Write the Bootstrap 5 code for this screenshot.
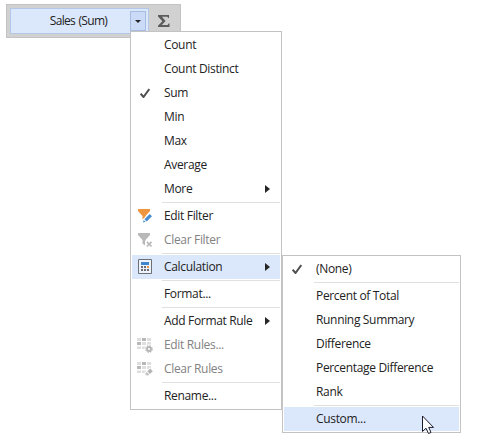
<!DOCTYPE html>
<html lang="en">
<head>
<meta charset="utf-8">
<title>Data item menu</title>
<link href="https://cdn.jsdelivr.net/npm/bootstrap@5.3.0/dist/css/bootstrap.min.css" rel="stylesheet">
<style>
body{font-family:"Open Sans","Noto Sans",sans-serif;font-size:12px;letter-spacing:-.33px;line-height:24px;color:#222;background:#fff;overflow:hidden}
.data-item{margin:4px 0 0 6px;width:175px;height:34px;padding:3px;background:#d1d1d1;border:1px solid #c3c3c3}
.field-box{width:139px;height:26px;background:#dbe7fb;border:1px solid #b3c7e8;padding:2px}
.field-name{padding-left:14px;letter-spacing:-.7px;word-spacing:1px}
.drop-btn{width:16px;height:20px;background:#cbdaf6;border:1px solid #a6bce0}
.sigma{margin-left:9px}
.popup{padding:1px;border:1px solid #c3c3c3;border-radius:0;background:#fff;font-size:inherit;line-height:inherit;color:inherit;min-width:0;--bs-dropdown-min-width:0}
.main-popup{left:130px;top:31px;width:152px;z-index:2}
.sub-popup{left:282px;top:255px;width:179px;z-index:3}
.entry{height:24px;padding-right:10px}
.entry.hot{background:#dbe7fb}
.entry.off{color:#828282}
.slot{width:32px;height:24px;padding-right:6px;flex:none}
.rule{height:1px;margin:1px 0 1px 30px;background:#e0e0e0}
.pointer{left:422px;top:415px;z-index:5}
svg{display:block;flex:none}
</style>
<script src="https://cdn.jsdelivr.net/npm/bootstrap@5.3.0/dist/js/bootstrap.bundle.min.js"></script>
</head>
<body>
<svg width="0" height="0" class="position-absolute">
<defs>
<g id="check"><path d="M.7 5.7 3.5 9 9.3 1" fill="none" stroke="#505050" stroke-width="2"/></g>
<g id="funnel"><path d="M0 0H12V2L7.5 7V13L4.5 10.500V7L0 2Z"/></g>
<g id="cells"><path fill="#dedede" d="M0 0h4v3H0zM10 0h4v3h-4zM5 4h4v3H5zM10 4h4v3h-4zM0 8.500h4v2.500H0zM5 8.500h4v2.500H5z"/><path fill="#b8b8b8" d="M5 0h4v3H5zM0 4h4v3H0z"/></g>
</defs>
</svg>
<div class="data-item d-flex align-items-center">
  <div class="field-box d-flex align-items-center">
    <div class="field-name flex-grow-1 text-center">Sales (Sum)</div>
    <div class="drop-btn d-flex align-items-center justify-content-center"><svg width="6" height="3"><path d="M0 0H6L3 3Z" fill="#262626"/></svg></div>
  </div>
  <svg class="sigma" width="12" height="12"><path d="M0 0H11V3H10L9.500 1.800H4L7.600 6 3.800 10H9.700L10.500 8.500H11.500V12H0V10.800L4.300 6.300 0 1.500Z" fill="#5c5c5c"/></svg>
</div>

<div class="dropdown-menu popup main-popup d-block position-absolute">
  <div class="entry d-flex align-items-center"><span class="slot"></span><span>Count</span></div>
  <div class="entry d-flex align-items-center"><span class="slot"></span><span>Count Distinct</span></div>
  <div class="entry d-flex align-items-center"><span class="slot d-flex align-items-center justify-content-center"><svg width="10" height="10"><use href="#check"/></svg></span><span>Sum</span></div>
  <div class="entry d-flex align-items-center"><span class="slot"></span><span>Min</span></div>
  <div class="entry d-flex align-items-center"><span class="slot"></span><span>Max</span></div>
  <div class="entry d-flex align-items-center"><span class="slot"></span><span>Average</span></div>
  <div class="entry d-flex align-items-center"><span class="slot"></span><span class="flex-grow-1">More</span><svg width="5" height="8"><path d="M0 0 5 4 0 8Z" fill="#262626"/></svg></div>
  <div class="rule"></div>
  <div class="entry d-flex align-items-center"><span class="slot d-flex align-items-center justify-content-center"><svg width="16" height="16"><use href="#funnel" x="1" y="1" fill="#f0953f"/><path d="M5 15 5.500 11.500 12 5.200 15 8.200 8.500 14.300Z" fill="#fff"/><path d="M6 14.500 6.700 12 8.600 13.800ZM7.400 11.200 12.700 6 15 8.300 9.700 13.400Z" fill="#4b8cd0"/></svg></span><span>Edit Filter</span></div>
  <div class="entry off d-flex align-items-center"><span class="slot d-flex align-items-center justify-content-center"><svg width="16" height="16"><use href="#funnel" x="1" y="1" fill="#b9b9b9"/><path d="M8 9H16V16H8Z" fill="#fff"/><path d="M9.900 9.900 14.500 14.500M14.500 9.900 9.900 14.500" stroke="#b9b9b9" stroke-width="1.700"/></svg></span><span>Clear Filter</span></div>
  <div class="rule"></div>
  <div class="entry hot d-flex align-items-center"><span class="slot d-flex align-items-center justify-content-center"><svg width="16" height="16"><path d="M1.500 .5H14.500V14.500H1.500Z" fill="#eef4fd" stroke="#6b7078"/><path d="M4 3H12V6H4Z" fill="#3f86cf"/><path d="M4 7h2v2H4zM7 7h2v2H7zM10 10h2v2h-2zM4 10h2v2H4zM7 10h2v2H7z" fill="#686d75"/><path d="M10 7h2v2h-2z" fill="#f0953f"/></svg></span><span class="flex-grow-1">Calculation</span><svg width="5" height="8"><path d="M0 0 5 4 0 8Z" fill="#262626"/></svg></div>
  <div class="rule"></div>
  <div class="entry d-flex align-items-center"><span class="slot"></span><span>Format...</span></div>
  <div class="rule"></div>
  <div class="entry d-flex align-items-center"><span class="slot"></span><span class="flex-grow-1">Add Format Rule</span><svg width="5" height="8"><path d="M0 0 5 4 0 8Z" fill="#262626"/></svg></div>
  <div class="entry off d-flex align-items-center"><span class="slot d-flex align-items-center justify-content-center"><svg width="16" height="16"><use href="#cells" y="1"/><circle cx="12" cy="12" r="4.500" fill="#fff"/><circle cx="12" cy="12" r="2" fill="none" stroke="#b5b5b5" stroke-width="1.800"/><circle cx="12" cy="12" r="3.200" fill="none" stroke="#b5b5b5" stroke-width="1.300" stroke-dasharray="1.300 1.210"/></svg></span><span>Edit Rules...</span></div>
  <div class="entry off d-flex align-items-center"><span class="slot d-flex align-items-center justify-content-center"><svg width="16" height="16"><use href="#cells" y="1"/><path d="M7 12 13 6.500 16 9.500 10 16Z" fill="#fff"/><path d="M10.300 10.300 13.200 7.500 15.800 10.200 12.900 12.900Z" fill="#b5b5b5"/><path d="M9.800 10.900 8 12.700 9.500 14.400H11.200L12.200 13.400Z" fill="#c4c4c4"/></svg></span><span>Clear Rules</span></div>
  <div class="rule"></div>
  <div class="entry d-flex align-items-center"><span class="slot"></span><span>Rename...</span></div>
</div>

<div class="dropdown-menu popup sub-popup d-block position-absolute">
  <div class="entry d-flex align-items-center"><span class="slot d-flex align-items-center justify-content-center"><svg width="10" height="10"><use href="#check"/></svg></span><span>(None)</span></div>
  <div class="rule"></div>
  <div class="entry d-flex align-items-center"><span class="slot"></span><span>Percent of Total</span></div>
  <div class="entry d-flex align-items-center"><span class="slot"></span><span>Running Summary</span></div>
  <div class="entry d-flex align-items-center"><span class="slot"></span><span>Difference</span></div>
  <div class="entry d-flex align-items-center"><span class="slot"></span><span>Percentage Difference</span></div>
  <div class="entry d-flex align-items-center"><span class="slot"></span><span>Rank</span></div>
  <div class="rule"></div>
  <div class="entry hot d-flex align-items-center"><span class="slot"></span><span>Custom...</span></div>
</div>
<svg class="pointer position-absolute" width="13" height="20"><path d="M.5 1V16.500L4 13.200 6.500 18.500 9 17.400 6.700 12.400H11.500Z" fill="#fff" stroke="#1a1a2a"/></svg>
</body>
</html>
